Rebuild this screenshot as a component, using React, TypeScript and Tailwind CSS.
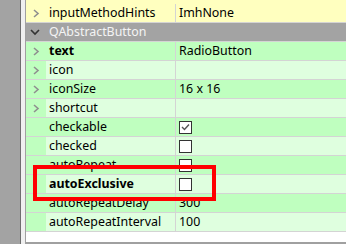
import React from "react";

type Prop = {
  name: string;
  value?: string;
  check?: boolean;
  expand?: boolean;
  bold?: boolean;
};

const props: Prop[] = [
  { name: "text", value: "RadioButton", expand: true, bold: true },
  { name: "icon", expand: true },
  { name: "iconSize", value: "16 x 16", expand: true },
  { name: "shortcut", expand: true },
  { name: "checkable", check: true },
  { name: "checked", check: false },
  { name: "autoRepeat", check: false },
  { name: "autoExclusive", check: false, bold: true },
  { name: "autoRepeatDelay", value: "300" },
  { name: "autoRepeatInterval", value: "100" },
];

const Chevron = () => (
  <svg width="7" height="9" viewBox="0 0 7 9" className="ml-[7px]">
    <polyline points="1,1 5,4.5 1,8" fill="none" stroke="#8f8f8f" strokeWidth="1.6" />
  </svg>
);

const CheckBox = ({ on }: { on: boolean }) => (
  <div className="w-[13px] h-[13px] border border-[#333] bg-white flex items-center justify-center">
    {on && (
      <svg width="11" height="11" viewBox="0 0 11 11">
        <polyline points="2,5 4.5,7.5 9,2.5" fill="none" stroke="#555" strokeWidth="1.4" />
      </svg>
    )}
  </div>
);

export default function App() {
  return (
    <div className="w-[346px] h-[244px] flex overflow-hidden bg-white text-[12.4px] text-black font-['Noto_Sans',sans-serif]">
      <div className="w-[21px] shrink-0 bg-[#a3a3a3] border-r border-[#6e6e6e]" />
      <div className="w-[4px] shrink-0 bg-[#f0f0f0]" />
      <div className="relative flex-1 flex flex-col border-l border-[#a0a0a0] border-b-2 border-b-[#a0a0a0]">
        {/* tail of the QWidget group */}
        <div className="flex h-[23px] shrink-0 pt-[4px] bg-[#ffffbf] border-b border-[#d4d4d4]">
          <div className="w-[20px] flex items-center">
            <Chevron />
          </div>
          <div className="w-[130px] pl-[3px] flex items-center border-r border-[#d4d4d4]">inputMethodHints</div>
          <div className="flex-1 pl-[3px] flex items-center">ImhNone</div>
        </div>

        {/* group header */}
        <div className="flex h-[19px] shrink-0 bg-[#a3a3a3] border-b border-[#d4d4d4] items-center">
          <div className="w-[20px] flex items-center">
            <svg width="10" height="7" viewBox="0 0 10 7" className="ml-[4px]">
              <polyline points="1,1 5,5 9,1" fill="none" stroke="#333" strokeWidth="1.6" />
            </svg>
          </div>
          <div className="pl-[3px] text-[#f4f4f4]">QAbstractButton</div>
        </div>

        {props.map((p, i) => {
          const bg = i % 2 === 0 ? "bg-[#bfffbf]" : "bg-[#dfffdf]";
          return (
            <div key={p.name} className="flex h-[19px] shrink-0 border-b border-[#d4d4d4]">
              <div className="w-[20px] bg-[#bfffbf] flex items-center">{p.expand && <Chevron />}</div>
              <div className={`w-[130px] pl-[3px] flex items-center border-r border-[#d4d4d4] ${bg} ${p.bold ? "font-bold" : ""}`}>
                {p.name}
              </div>
              <div className={`flex-1 pl-[3px] flex items-center ${bg}`}>
                {p.check !== undefined ? <CheckBox on={p.check} /> : p.value}
              </div>
            </div>
          );
        })}

        <div className="flex-1" />

        {/* highlight box */}
        <div className="absolute left-[7px] top-[165px] w-[183px] h-[36px] border-4 border-[#ff0000]" />
      </div>
    </div>
  );
}
